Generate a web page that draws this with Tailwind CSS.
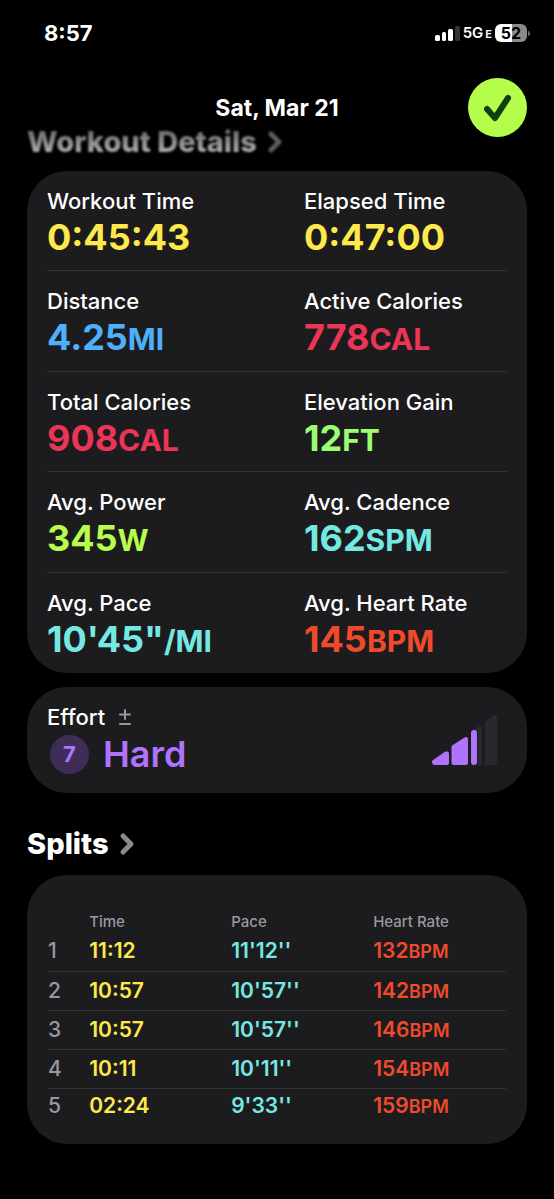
<!DOCTYPE html>
<html lang="en">
<head>
  <meta charset="UTF-8" />
  <meta name="viewport" content="width=device-width, initial-scale=1.0" />
  <title>Workout Summary</title>
  <script src="https://cdn.jsdelivr.net/npm/@tailwindcss/browser@4"></script>
</head>
<body class="bg-black text-white min-h-screen font-[Inter,sans-serif]">

  <!-- Status bar -->
  <div class="flex items-center justify-between pt-4 pl-11 pr-6 h-[50px]">
    <span class="text-[22px] leading-8 font-bold">8:57</span>
    <div class="flex items-center gap-[3px]">
      <svg class="w-[25px] h-4" viewBox="0 0 25 16" fill="#fff" aria-label="Signal">
        <rect x="0" y="10" width="5" height="6" rx="1.5" />
        <rect x="7" y="7" width="4" height="9" rx="1.5" />
        <rect x="13" y="4" width="5" height="12" rx="1.5" />
        <rect x="20" y="1" width="5" height="15" rx="1.5" fill="#343436" />
      </svg>
      <span class="flex items-baseline gap-[2px] text-[15px] leading-4 font-semibold">5G<span class="text-[11px]">E</span></span>
      <div class="flex items-center">
        <div class="w-8 h-[18px] rounded-md bg-linear-to-r from-white from-52% to-[#8a8a8c] to-52% text-black text-[16px] leading-[18px] font-bold text-center">52</div>
        <div class="w-[2px] h-[5px] ml-px rounded-r-full bg-[#69696b]"></div>
      </div>
    </div>
  </div>

  <!-- Title bar -->
  <header class="relative flex items-center justify-center mt-7 mx-[27px] h-[59px]">
    <h1 class="text-[23px] leading-7 font-bold">Sat, Mar 21</h1>
    <button type="button" aria-label="Done" class="absolute right-0 size-[59px] rounded-full bg-[#b4fe4b] flex items-center justify-center">
      <svg class="size-[59px]" viewBox="0 0 59 59" fill="none" stroke="#133d12" stroke-width="6" stroke-linecap="round" stroke-linejoin="round">
        <path d="M19 31l8 9 13-20" />
      </svg>
    </button>
  </header>

  <main class="px-[27px] pb-[54px]">
    <h2 class="-mt-3 text-[29px] leading-[34px] font-extrabold blur-[1px]">
      <a href="#details" class="flex items-center gap-[10px]">
        <span class="bg-linear-to-b from-[#5a5a5a] to-[#c4c4c4] bg-clip-text text-transparent">Workout Details</span>
        <svg class="w-4 h-6" viewBox="0 0 16 24" fill="none" stroke="#5c5c5e" stroke-width="5" stroke-linecap="round" stroke-linejoin="round"><path d="M4 4l8 8-8 8" /></svg>
      </a>
    </h2>

    <section id="details" class="mt-3 px-5 rounded-[40px] bg-[#1c1c1e]">
      <dl id="metrics" class="grid auto-rows-fr min-h-[502px] divide-y divide-[#323234]"></dl>
    </section>

    <section class="mt-[14px] pl-5 pr-[30px] pt-4 pb-[17px] rounded-[40px] bg-[#1c1c1e] flex items-center justify-between">
      <div>
        <div class="flex items-center gap-[14px] text-[22px] leading-7 font-medium">
          Effort
          <svg class="w-3 h-4" viewBox="0 0 12 16" fill="none" stroke="#98989e" stroke-width="2" stroke-linecap="round"><path d="M6 1v9M1 5.500h10M1 15h10" /></svg>
        </div>
        <div class="mt-px flex items-center gap-[14px] pl-[3px] text-[#af73fd]">
          <span class="size-[39px] rounded-full bg-[#3f2c57] text-[22px] leading-[39px] font-bold text-center">7</span>
          <span class="text-[36px] leading-[44px] font-semibold">Hard</span>
        </div>
      </div>
      <svg class="w-[65px] h-[50px]" viewBox="0 0 65 50" aria-label="Effort level">
        <g fill="#2a282f" stroke="#2a282f" stroke-width="3" stroke-linejoin="round">
          <path d="M41.500 16L48.500 12.500V48.500H41.500z" />
          <path d="M54.500 7L63.500 1.500V48.500H54.500z" />
        </g>
        <rect x="38" y="16" width="8" height="34" fill="#1c1c1e" />
        <g fill="#af73fd" stroke="#af73fd" stroke-width="4" stroke-linejoin="round">
          <path d="M2 47L14 38.500H15V48H2.500z" />
          <path d="M21.500 32L34 24V48H21.500z" />
        </g>
        <rect x="39" y="15" width="6" height="35" rx="3" fill="#af73fd" />
      </svg>
    </section>

    <h2 class="mt-[34px] text-[29px] leading-[34px] font-extrabold">
      <a href="#splits" class="flex items-center gap-[10px]">
        Splits
        <svg class="w-4 h-6" viewBox="0 0 16 24" fill="none" stroke="#8a8a8e" stroke-width="5" stroke-linecap="round" stroke-linejoin="round"><path d="M4 4l8 8-8 8" /></svg>
      </a>
    </h2>

    <section id="splits" class="mt-[14px] px-[21px] pt-[37px] pb-5 rounded-[40px] bg-[#1c1c1e]">
      <table class="w-full table-fixed text-left">
        <thead>
          <tr class="text-[15px] leading-5 text-[#98989e]">
            <th class="w-[9%] p-0" aria-label="Split"></th>
            <th class="w-[31%] p-0 font-medium">Time</th>
            <th class="w-[31%] p-0 font-medium">Pace</th>
            <th class="p-0 font-medium">Heart Rate</th>
          </tr>
        </thead>
        <tbody id="split-rows" class="divide-y divide-[#323234]"></tbody>
      </table>
    </section>
  </main>

  <script>
    const metrics = [
      ["Workout Time", "0:45:43", "", "text-[#fde94b]"],
      ["Elapsed Time", "0:47:00", "", "text-[#fde94b]"],
      ["Distance", "4.25", "MI", "text-[#4eb0fa]"],
      ["Active Calories", "778", "CAL", "text-[#ea3556]"],
      ["Total Calories", "908", "CAL", "text-[#ea3556]"],
      ["Elevation Gain", "12", "FT", "text-[#9bfd72]"],
      ["Avg. Power", "345", "W", "text-[#b9fd4c]"],
      ["Avg. Cadence", "162", "SPM", "text-[#76e8e3]"],
      ["Avg. Pace", "10'45\"", "/MI", "text-[#76e8e3]"],
      ["Avg. Heart Rate", "145", "BPM", "text-[#ef4a2c]"]
    ];

    const splits = [
      ["11:12", "11'12''", 132],
      ["10:57", "10'57''", 142],
      ["10:57", "10'57''", 146],
      ["10:11", "10'11''", 154],
      ["02:24", "9'33''", 159]
    ];

    function metricCell([label, value, unit, color]) {
      return `
        <div>
          <dt class="text-[22px] leading-7 font-medium">${label}</dt>
          <dd class="text-[36px] leading-[44px] font-bold ${color}">${value}<span class="text-[30px] leading-none">${unit}</span></dd>
        </div>`;
    }

    let html = "";
    for (let i = 0; i < metrics.length; i += 2) {
      html += `<div class="grid grid-cols-2 gap-x-[54px] pt-4 pb-2">${metricCell(metrics[i])}${metricCell(metrics[i + 1])}</div>`;
    }
    document.getElementById("metrics").innerHTML = html;

    document.getElementById("split-rows").innerHTML = splits.map(([time, pace, bpm], i) => `
      <tr class="h-[39px] last:h-9 text-[21px] leading-7 font-semibold">
        <td class="p-0 font-medium text-[#98989e]">${i + 1}</td>
        <td class="p-0 text-[#fde94b]">${time}</td>
        <td class="p-0 text-[#76e8e3]">${pace}</td>
        <td class="p-0 text-[#ef4a2c]">${bpm}<span class="text-[18px] leading-none">BPM</span></td>
      </tr>
    `).join("");
  </script>
</body>
</html>
